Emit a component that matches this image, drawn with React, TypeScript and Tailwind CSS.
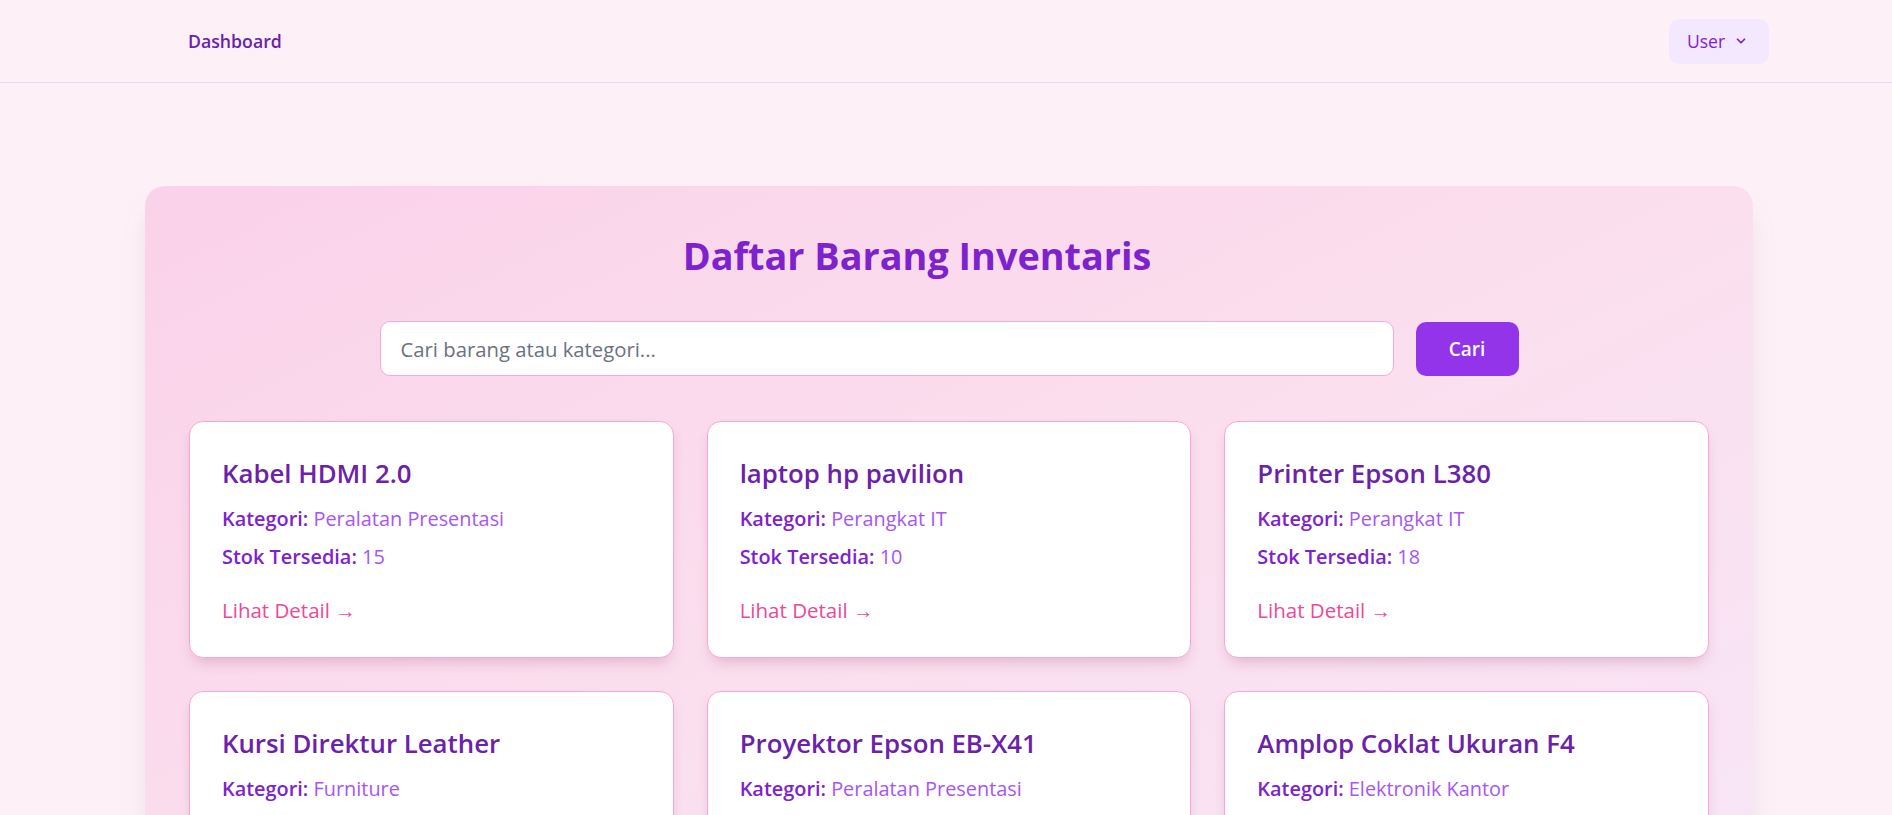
import React from "react";

const items = [
  { name: "Kabel HDMI 2.0", kategori: "Peralatan Presentasi", stok: 15 },
  { name: "laptop hp pavilion", kategori: "Perangkat IT", stok: 10 },
  { name: "Printer Epson L380", kategori: "Perangkat IT", stok: 18 },
  { name: "Kursi Direktur Leather", kategori: "Furniture", stok: 5 },
  { name: "Proyektor Epson EB-X41", kategori: "Peralatan Presentasi", stok: 7 },
  { name: "Amplop Coklat Ukuran F4", kategori: "Elektronik Kantor", stok: 100 },
];

function Card({ name, kategori, stok }: { name: string; kategori: string; stok: number }) {
  return (
    <div className="bg-white border border-[#f9a8d4] rounded-[14px] shadow-[0_8px_14px_-4px_rgba(160,60,120,0.25)] pl-[32px] pr-[32px] pt-[34px] pb-[33px]">
      <h2 className="text-[25.8px] leading-[34px] font-semibold text-[#6b21a8]">{name}</h2>
      <p className="mt-[15px] text-[19.9px] leading-[28px] text-[#a855f7]">
        <span className="font-semibold text-[#7e22ce]">Kategori:</span> {kategori}
      </p>
      <p className="mt-[10px] text-[19.9px] leading-[28px] text-[#a855f7]">
        <span className="font-semibold text-[#7e22ce]">Stok Tersedia:</span> {stok}
      </p>
      <a className="mt-[25px] block text-[20.5px] leading-[28px] text-[#ec4899] font-medium">Lihat Detail →</a>
    </div>
  );
}

export default function App() {
  return (
    <div className="min-h-screen bg-[#fdf1f7]" style={{ fontFamily: '"Open Sans", "Noto Sans", sans-serif' }}>
      <nav className="h-[83px] border-b border-[#e9d5ff] flex items-center justify-between pl-[188px] pr-[123px]">
        <span className="text-[17.7px] font-semibold text-[#6b21a8]">Dashboard</span>
        <button className="h-[45px] w-[100px] rounded-[10px] bg-[#f3e8ff] flex items-center pl-[18px] gap-[9px] text-[#7e22ce]">
          <span className="text-[17.5px]">User</span>
          <svg width="14" height="14" viewBox="0 0 24 24" fill="none" stroke="currentColor" strokeWidth="3" strokeLinecap="round" strokeLinejoin="round">
            <path d="M6 9l6 6 6-6" />
          </svg>
        </button>
      </nav>
      <main className="pt-[103px]">
        <div className="ml-[145px] w-[1608px] rounded-[20px] bg-gradient-to-br from-[#fad2ea] via-[#fbdfee] to-[#f6e6f8] shadow-[0_20px_30px_-8px_rgba(150,80,130,0.18)] px-[44px] pt-[46px] pb-[44px]">
          <h1 className="text-center pr-[64px] text-[37.8px] leading-[48px] font-bold text-[#7e22ce]">Daftar Barang Inventaris</h1>
          <div className="mt-[41px] mx-auto w-[1139px] flex gap-[22px]">
            <input
              className="flex-1 h-[55px] rounded-[10px] border border-[#f9a8d4] bg-white px-[20px] text-[20.3px] text-gray-700 placeholder:text-[#6b7280] outline-none"
              placeholder="Cari barang atau kategori..."
            />
            <button className="mt-[1px] w-[103px] h-[54px] rounded-[10px] bg-[#9333ea] text-white text-[19px] font-semibold">Cari</button>
          </div>
          <div className="mt-[45px] grid grid-cols-3 gap-[33px]">
            {items.map((it) => (
              <Card key={it.name} {...it} />
            ))}
          </div>
        </div>
      </main>
    </div>
  );
}
